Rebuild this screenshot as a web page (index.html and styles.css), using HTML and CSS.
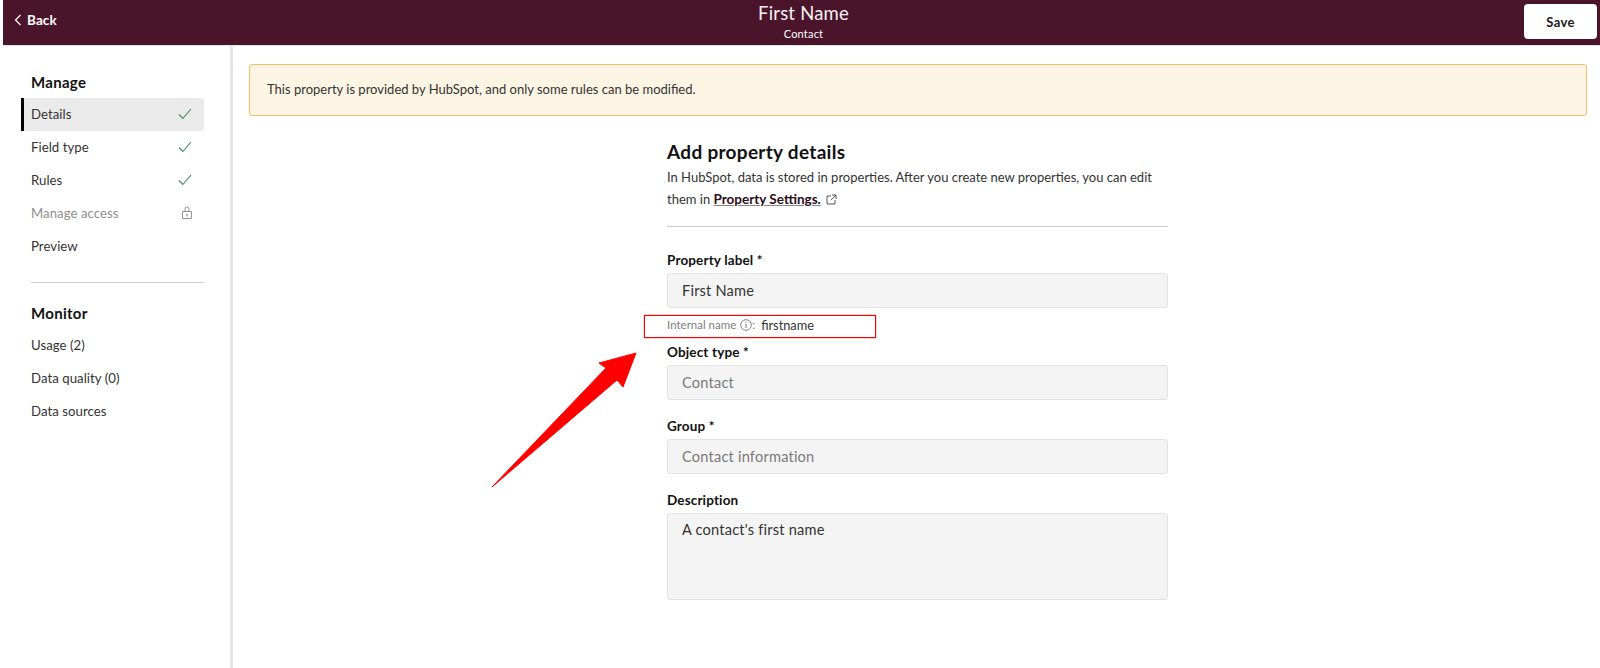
FILE: index.html
```html
<!DOCTYPE html>
<html lang="en">
<head>
<meta charset="utf-8">
<title>First Name</title>
<link rel="stylesheet" href="styles.css">
</head>
<body>
<div class="page">
  <header class="topbar">
    <a class="back"><svg class="back-icon" viewBox="0 0 8 12" width="8" height="12"><path d="M6.5 1 1.5 6l5 5" fill="none" stroke="#fff" stroke-width="1.2"/></svg>Back</a>
    <div class="title">
      <div class="title-main">First Name</div>
      <div class="title-sub">Contact</div>
    </div>
    <button class="save">Save</button>
  </header>
  <div class="body">
    <aside class="sidebar">
      <h2 class="side-head">Manage</h2>
      <div class="item active"><span>Details</span><svg class="check" viewBox="0 0 14 12" width="14" height="12"><path d="M1 6.5 4.8 10.5 13 1" fill="none" stroke="#3d8b5a" stroke-width="1.1"/></svg></div>
      <div class="item"><span>Field type</span><svg class="check" viewBox="0 0 14 12" width="14" height="12"><path d="M1 6.5 4.8 10.5 13 1" fill="none" stroke="#3d8b5a" stroke-width="1.1"/></svg></div>
      <div class="item"><span>Rules</span><svg class="check" viewBox="0 0 14 12" width="14" height="12"><path d="M1 6.5 4.8 10.5 13 1" fill="none" stroke="#3d8b5a" stroke-width="1.1"/></svg></div>
      <div class="item muted"><span>Manage access</span><svg class="lock" viewBox="0 0 10 13" width="10" height="13"><path d="M.5 5.5h9v7h-9zM3 5.5V3a2 2 0 0 1 4 0v2.5" fill="none" stroke="#8a8a8a" stroke-width=".9"/><path d="M5 8v2.4" stroke="#8a8a8a" stroke-width="1.2"/></svg></div>
      <div class="item"><span>Preview</span></div>
      <hr class="side-rule">
      <h2 class="side-head">Monitor</h2>
      <div class="item"><span>Usage (2)</span></div>
      <div class="item"><span>Data quality (0)</span></div>
      <div class="item"><span>Data sources</span></div>
    </aside>
    <main class="main">
      <div class="alert">This property is provided by HubSpot, and only some rules can be modified.</div>
      <section class="form">
        <h1 class="form-title">Add property details</h1>
        <p class="intro">In HubSpot, data is stored in properties. After you create new properties, you can edit<br>them in <a class="link">Property Settings.</a><svg class="ext" viewBox="0 0 11 11" width="11" height="11"><path d="M5 2H1v8h8V6M6 1h4v4M10 1 5 6" fill="none" stroke="#444" stroke-width=".9"/></svg></p>
        <hr class="form-rule">
        <label class="label first">Property label *</label>
        <div class="input dark">First Name</div>
        <div class="internal"><span class="internal-key">Internal name</span><svg class="info" viewBox="0 0 12 12" width="12" height="12"><circle cx="6" cy="6" r="5.3" fill="none" stroke="#777" stroke-width=".9"/><path d="M6 5v4M6 3v1" stroke="#777"/></svg><span class="internal-key">:</span><span class="internal-val">firstname</span></div>
        <label class="label tight">Object type *</label>
        <div class="input">Contact</div>
        <label class="label">Group *</label>
        <div class="input">Contact information</div>
        <label class="label">Description</label>
        <div class="input area dark">A contact's first name</div>
      </section>
    </main>
  </div>
  <div class="redbox"></div>
  <svg class="arrow" viewBox="0 0 150 140" width="150" height="140"><path d="M146 3 109 13 116 18 2 137 127 30 133 37Z" fill="#f00" stroke="#f00" stroke-width="1" stroke-linejoin="round"/></svg>
</div>
</body>
</html>
```
FILE: styles.css
```css
* { box-sizing: border-box; }
html, body { margin: 0; padding: 0; background: #fff; }
body { font-family: "Lato", "Noto Sans", sans-serif; color: #1f1f1f; overflow: hidden; }
.page { position: relative; width: 1600px; height: 668px; padding-left: 3px; }
.topbar { height: 46px; background: #4a142b; border-bottom: 1px solid #e4e4e6; display: flex; align-items: flex-start; position: relative; color: #fff; }
.back { display: flex; align-items: center; gap: 5px; padding: 12px 0 0 11px; font-weight: 700; font-size: 13.5px; letter-spacing: .1px; line-height: 16px; }
.title { position: absolute; left: 4px; right: 0; top: 2px; text-align: center; }
.title-main { font-size: 18.5px; line-height: 22px; letter-spacing: .2px; color: #f6f0f6; }
.title-sub { font-size: 11px; line-height: 14px; margin-top: 3px; letter-spacing: .2px; }
.save { position: relative; margin: 4px 3px 0 auto; width: 73px; height: 35px; background: #fff; border: 0; border-radius: 4px; font: 700 13px "Lato", sans-serif; color: #1a1a1a; letter-spacing: .3px; }
.body { display: flex; height: 622px; }
.sidebar { width: 230px; border-right: 3px solid #e6e6e6; padding: 26px 26px 0 18px; flex: none; }
.side-head { margin: 0 0 6px 10px; font-size: 15px; line-height: 20px; font-weight: 700; color: #111; letter-spacing: .3px; }
.item { height: 33px; padding: 0 11px 2px 10px; display: flex; align-items: center; justify-content: space-between; font-size: 13.2px; color: #333; letter-spacing: .05px; }
.item.active { background: #eaeaea; border-left: 3px solid #000; padding-left: 7px; border-radius: 0 4px 4px 0; }
.item.muted { color: #8f8f8f; }
.check { margin-right: 1px; }
.lock { margin-right: 1px; }
.side-rule { border: 0; border-top: 1px solid #cfcfcf; margin: 19px 0 20px 10px; }
.main { flex: 1; padding: 18px 13px 0 16px; }
.alert { height: 52px; background: #fdf5e4; border: 1px solid #f3bf66; border-radius: 3px; padding: 0 17px 2px; display: flex; align-items: center; font-size: 13px; color: #333; }
.form { width: 501px; margin-left: 418px; padding-top: 24px; }
.form-title { margin: 0; font-size: 19px; line-height: 24px; font-weight: 700; color: #111; letter-spacing: .3px; }
.intro { margin: 2px 0 0; font-size: 13px; line-height: 22px; color: #333; }
.link { font-size: 13.5px; font-weight: 700; color: #2b0b1a; text-decoration: underline; text-decoration-color: #888; }
.ext { margin-left: 5px; vertical-align: -1px; }
.form-rule { border: 0; border-top: 1px solid #c9c9c9; margin: 16px 0 0; }
.label { display: block; margin-top: 16px; height: 20px; font-size: 13.5px; line-height: 20px; font-weight: 700; color: #111; letter-spacing: .15px; }
.label.first { margin-top: 23px; }
.label.tight { margin-top: 7px; }
.input { margin-top: 3px; height: 35px; background: #f4f4f4; border: 1px solid #e3e3e3; border-radius: 3px; padding: 0 14px; display: flex; align-items: center; font-size: 14.6px; color: #7a7a7a; letter-spacing: .2px; }
.input.dark { color: #333; }
.input.area { height: 87px; align-items: flex-start; padding-top: 7px; }
.internal { height: 23px; margin-top: 4px; padding-top: 2px; display: flex; align-items: center; font-size: 11.5px; color: #7d7d7d; }
.info { margin-left: 4px; }
.internal-val { margin-left: 6px; font-size: 12.8px; color: #333; }
.redbox { position: absolute; left: 644px; top: 315px; width: 232px; height: 23px; border: 1px solid #f00; box-shadow: 0 0 1px #f00; }
.arrow { position: absolute; left: 490px; top: 350px; }
```
